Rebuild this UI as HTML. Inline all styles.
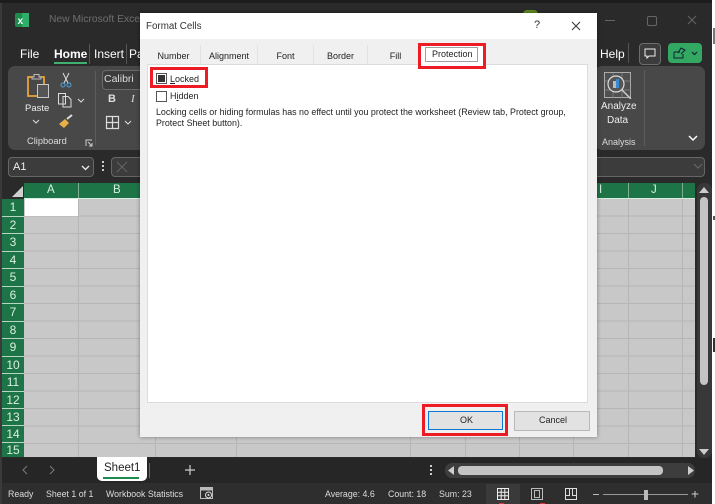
<!DOCTYPE html>
<html><head><meta charset="utf-8">
<style>
html,body{margin:0;padding:0}
body{width:715px;height:504px;overflow:hidden;position:relative;background:#2a2a2a;font-family:"Liberation Sans",sans-serif;color:#fff}
.a{position:absolute}
.t{position:absolute;white-space:nowrap;line-height:1}
.rh{position:absolute;left:2px;width:22px;background:#1d7446;color:#d8f0e0;font-size:12px;text-align:center;border-bottom:1px solid #b9d6c4;box-sizing:border-box}
.d{color:#222;font-size:9px}
.s{color:#ddd;font-size:8.800px}
.tab{position:absolute;top:45px;height:19px;font-size:9px;color:#222;text-align:center;line-height:22px;border-right:1px solid #e2e2e2}
.v{position:absolute;top:198px;width:1px;height:259px;background:#b6b6b6}
.h{position:absolute;top:183px;width:1px;height:15px;background:#7fb095}
</style></head><body>
<div class="a" style="left:712px;top:0;width:3px;height:504px;background:#fff"></div>
<div class="a" style="left:713px;top:28px;width:2px;height:16px;background:#777"></div>
<div class="a" style="left:713px;top:216px;width:2px;height:4px;background:#555"></div>
<div class="a" style="left:713px;top:338px;width:2px;height:14px;background:#333"></div>
<div class="a" style="left:0;top:0;width:2px;height:504px;background:#3a3a3a"></div>
<div class="a" style="left:0;top:0;width:712px;height:3px;background:#1c1c1c"></div>

<!-- title bar -->
<svg class="a" style="left:15px;top:13px" width="15" height="15"><rect width="14" height="14" rx="2" fill="#1f8a4c"/><rect x="7" y="0" width="7" height="14" fill="#2fae6a"/><text x="2.500" y="11" font-size="10" font-weight="bold" fill="#fff" font-family="Liberation Sans">x</text></svg>
<div class="t" style="left:49px;top:15px;font-size:10.300px;color:#6e6e6e">New Microsoft Excel</div>
<div class="a" style="left:523px;top:10px;width:15px;height:4px;background:#5f8c20;border-radius:8px 8px 0 0"></div>
<div class="a" style="left:605px;top:20px;width:10px;height:1px;background:#666"></div>
<div class="a" style="left:647px;top:16px;width:8px;height:8px;border:1px solid #666;border-radius:2px"></div>
<svg class="a" style="left:686px;top:14px" width="12" height="12"><path d="M2 2L10 10M10 2L2 10" stroke="#666" stroke-width="1"/></svg>

<!-- tabs -->
<div class="t" style="left:20px;top:48px;font-size:12px">File</div>
<div class="t" style="left:54px;top:48px;font-size:12px;font-weight:bold">Home</div>
<div class="a" style="left:54px;top:62px;width:33px;height:2px;background:#3fb06f"></div>
<div class="a" style="left:89px;top:44px;width:1px;height:20px;background:#555"></div>
<div class="t" style="left:94px;top:48px;font-size:12px">Insert</div>
<div class="a" style="left:126px;top:44px;width:1px;height:20px;background:#555"></div>
<div class="t" style="left:129px;top:48px;font-size:12px">Pa</div>
<div class="t" style="left:600px;top:48px;font-size:12px">Help</div>
<div class="a" style="left:628px;top:43px;width:1px;height:20px;background:#555"></div>
<div class="a" style="left:639px;top:43px;width:20px;height:20px;border:1px solid #6d6d6d;border-radius:4px;background:#3c3c3c"></div>
<svg class="a" style="left:643px;top:47px" width="14" height="14"><path d="M2 2H12V9H6L4 11V9H2Z" fill="none" stroke="#eee" stroke-width="1"/></svg>
<div class="a" style="left:668px;top:43px;width:34px;height:20px;border-radius:4px;background:#33a862"></div>
<svg class="a" style="left:672px;top:46px" width="28" height="14"><path d="M2 6H8M2 6V12H11V8M6 7L9 2L13 4L9 8" fill="none" stroke="#123" stroke-width="1"/><path d="M20 6L22.500 8.500L25 6" fill="none" stroke="#123" stroke-width="1.200"/></svg>

<!-- ribbon -->
<div class="a" style="left:8px;top:66px;width:317px;height:84px;background:#484848;border-radius:7px"></div>
<div class="a" style="left:595px;top:66px;width:110px;height:84px;background:#484848;border-radius:7px"></div>
<svg class="a" style="left:26px;top:73px" width="25" height="26"><path d="M8 4H2V23H17" fill="none" stroke="#e9a43b" stroke-width="1.800"/><path d="M13 4H18V11" fill="none" stroke="#e9a43b" stroke-width="1.800"/><path d="M8 4V1.500H13V4H15V6H6V4Z" fill="#484848" stroke="#bbb"/><rect x="11.500" y="11.500" width="11" height="13" fill="#555" stroke="#c8c8c8"/></svg>
<div class="t" style="left:25px;top:104px;font-size:9.500px;color:#eee">Paste</div>
<svg class="a" style="left:31px;top:118px" width="10" height="8"><path d="M2 2L5 5L8 2" fill="none" stroke="#ddd"/></svg>
<svg class="a" style="left:60px;top:72px" width="12" height="16"><path d="M3 1L8 11M9 1L4 11" stroke="#ddd" fill="none"/><circle cx="3" cy="13" r="2" fill="none" stroke="#4ba3e0"/><circle cx="9" cy="13" r="2" fill="none" stroke="#4ba3e0"/></svg>
<svg class="a" style="left:58px;top:93px" width="28" height="15"><path d="M.5 .5H7.500V11H.5Z M5 3.500H10L13 6.500V14H5Z" fill="#484848" stroke="#ddd"/><path d="M20 6L23 9L26 6" fill="none" stroke="#ddd"/></svg>
<svg class="a" style="left:58px;top:114px" width="16" height="16"><path d="M1 10L7 5L11 9L6 14Z" fill="#e9b048"/><path d="M9 5L14 1" stroke="#ddd" stroke-width="2"/></svg>
<div class="t" style="left:27px;top:137px;font-size:9.300px;color:#ddd">Clipboard</div>
<svg class="a" style="left:85px;top:139px" width="8" height="8"><path d="M1 7V1H7M3 3L7 7M7 4V7H4" fill="none" stroke="#ccc"/></svg>
<div class="a" style="left:95px;top:71px;width:1px;height:74px;background:#5c5c5c"></div>
<div class="a" style="left:102px;top:70px;width:38px;height:18px;background:#3c3c3c;border:1px solid #6a6a6a;border-radius:4px 0 0 4px"></div>
<div class="t" style="left:104px;top:74px;font-size:10.500px;color:#ddd">Calibri</div>
<div class="t" style="left:108px;top:94px;font-size:11px;font-weight:bold;color:#ddd">B</div>
<div class="t" style="left:131px;top:94px;font-size:11px;font-style:italic;font-family:'Liberation Serif',serif;color:#ddd">I</div>
<svg class="a" style="left:105px;top:115px" width="34" height="15"><path d="M1.500 1.500H13.500V13.500H1.500ZM7.500 1.500V13.500M1.500 7.500H13.500" fill="none" stroke="#ddd" stroke-width="1.200"/><path d="M20 6L23 9L26 6" fill="none" stroke="#ddd"/></svg>

<svg class="a" style="left:604px;top:72px" width="29" height="27"><rect x=".5" y=".5" width="26" height="25" fill="#505050" stroke="#aaa"/><path d="M1 9H27M1 18H27M9 1V26M18 1V26" stroke="#8a8a8a" stroke-width=".7"/><circle cx="12" cy="12" r="8" fill="#555" stroke="#ddd" stroke-width="1.200"/><rect x="9" y="9" width="3" height="7" fill="#bbb"/><rect x="12" y="7" width="3" height="9" fill="#3b8ad0"/><path d="M18 18L27 27" stroke="#ccc" stroke-width="1.500"/></svg>
<div class="t" style="left:601px;top:102px;font-size:10px;color:#eee">Analyze</div>
<div class="t" style="left:607px;top:116px;font-size:10px;color:#eee">Data</div>
<div class="t" style="left:602px;top:138px;font-size:9px;color:#ddd">Analysis</div>
<div class="a" style="left:644px;top:70px;width:1px;height:76px;background:#5c5c5c"></div>
<svg class="a" style="left:688px;top:134px" width="10" height="9"><path d="M1 2L5 6L9 2" fill="none" stroke="#fff" stroke-width="1.500"/></svg>

<!-- formula bar -->
<div class="a" style="left:8px;top:157px;width:86px;height:20px;box-sizing:border-box;background:#3c3c3c;border:1px solid #666;border-radius:4px"></div>
<div class="t" style="left:13px;top:162px;font-size:11px;color:#eee">A1</div>
<svg class="a" style="left:81px;top:164px" width="10" height="8"><path d="M1 2L4.500 5.500L8 2" fill="none" stroke="#eee" stroke-width="1.300"/></svg>
<div class="a" style="left:102px;top:161px;width:2px;height:2px;background:#ccc;box-shadow:0 4px #ccc,0 8px #ccc"></div>
<div class="a" style="left:111px;top:157px;width:30px;height:20px;box-sizing:border-box;background:#3c3c3c;border:1px solid #666;border-radius:4px 0 0 4px"></div>
<svg class="a" style="left:116px;top:161px" width="12" height="12"><path d="M1 1L11 11M11 1L1 11" stroke="#666"/></svg>
<div class="a" style="left:597px;top:157px;width:108px;height:20px;box-sizing:border-box;background:#3c3c3c;border:1px solid #666;border-left:0;border-radius:0 4px 4px 0"></div>
<svg class="a" style="left:693px;top:162px" width="10" height="8"><path d="M1 2L5 6L9 2" fill="none" stroke="#666" stroke-width="1.200"/></svg>

<!-- grid -->
<div class="a" style="left:24px;top:198px;width:671px;height:259px;background:#c8c8c8"></div>
<div class="a" style="left:24px;top:199px;width:671px;height:258px;background-image:repeating-linear-gradient(to bottom,transparent 0,transparent 16.500px,#b6b6b6 16.500px,#b6b6b6 17.500px)"></div>
<div class="v" style="left:78px"></div>
<div class="v" style="left:155px"></div>
<div class="v" style="left:236px"></div>
<div class="v" style="left:410px"></div>
<div class="v" style="left:465px"></div>
<div class="v" style="left:519px"></div>
<div class="v" style="left:573px"></div>
<div class="v" style="left:628px"></div>
<div class="v" style="left:682px"></div>
<div class="a" style="left:25px;top:199px;width:53px;height:17px;background:#fff"></div>

<!-- col headers -->
<div class="a" style="left:24px;top:183px;width:671px;height:16px;background:#1d7446;border-bottom:1px solid #d8ecdf;box-sizing:border-box"></div>
<svg class="a" style="left:10px;top:185px" width="14" height="13"><path d="M13 1V12H2Z" fill="#d0d0d0"/></svg>
<div class="h" style="left:78px"></div>
<div class="h" style="left:155px"></div>
<div class="h" style="left:628px"></div>
<div class="h" style="left:682px"></div>
<div class="t" style="left:47px;top:185px;font-size:11.500px;color:#d8f0e0">A</div>
<div class="t" style="left:113px;top:185px;font-size:11.500px;color:#d8f0e0">B</div>
<div class="t" style="left:599px;top:185px;font-size:11.500px;color:#d8f0e0">I</div>
<div class="t" style="left:651px;top:185px;font-size:11.500px;color:#d8f0e0">J</div>

<div class="rh" style="top:199px;height:17.500px;line-height:17px">1</div>
<div class="rh" style="top:216.500px;height:17.500px;line-height:17px">2</div>
<div class="rh" style="top:234px;height:17.500px;line-height:17px">3</div>
<div class="rh" style="top:251.500px;height:17.500px;line-height:17px">4</div>
<div class="rh" style="top:269px;height:17.500px;line-height:17px">5</div>
<div class="rh" style="top:286.500px;height:17.500px;line-height:17px">6</div>
<div class="rh" style="top:304px;height:17.500px;line-height:17px">7</div>
<div class="rh" style="top:321.500px;height:17.500px;line-height:17px">8</div>
<div class="rh" style="top:339px;height:17.500px;line-height:17px">9</div>
<div class="rh" style="top:356.500px;height:17.500px;line-height:17px">10</div>
<div class="rh" style="top:374px;height:17.500px;line-height:17px">11</div>
<div class="rh" style="top:391.500px;height:17.500px;line-height:17px">12</div>
<div class="rh" style="top:409px;height:17px;line-height:17px">13</div>
<div class="rh" style="top:426px;height:17px;line-height:17px">14</div>
<div class="rh" style="top:443px;height:14px;line-height:15px;border:0">15</div>

<!-- vertical scrollbar -->
<div class="a" style="left:697px;top:183px;width:15px;height:275px;background:#383838;border-radius:7px"></div>
<svg class="a" style="left:698px;top:186px" width="12" height="9"><path d="M6 1L11 7H1Z" fill="#ccc"/></svg>
<div class="a" style="left:700px;top:197px;width:8px;height:188px;background:#c4c4c4;border-radius:4px"></div>
<svg class="a" style="left:698px;top:448px" width="12" height="9"><path d="M1 1H11L6 7Z" fill="#ccc"/></svg>

<!-- sheet bar -->
<div class="a" style="left:2px;top:458px;width:710px;height:25px;background:#262626"></div>
<svg class="a" style="left:20px;top:464px" width="40" height="12"><path d="M7 2L3 6L7 10M30 2L34 6L30 10" fill="none" stroke="#777" stroke-width="1.100"/></svg>
<div class="a" style="left:97px;top:457px;width:50px;height:24px;background:#fff;border-radius:0 0 5px 5px"></div>
<div class="t" style="left:104px;top:463px;font-size:11.500px;color:#222">Sheet1</div>
<div class="a" style="left:103px;top:477px;width:36px;height:2px;background:#1d8a4e"></div>
<div class="a" style="left:149px;top:463px;width:1px;height:15px;background:#666"></div>
<svg class="a" style="left:183px;top:463px" width="14" height="14"><path d="M7 2V12M2 7H12" stroke="#ccc" stroke-width="1.200"/></svg>
<div class="a" style="left:430px;top:465px;width:2px;height:2px;background:#ccc;box-shadow:0 4px #ccc,0 8px #ccc"></div>
<div class="a" style="left:445px;top:463px;width:250px;height:15px;background:#3d3d3d;border-radius:7px"></div>
<svg class="a" style="left:447px;top:465px" width="10" height="11"><path d="M7 1L1 5.500L7 10Z" fill="#ccc"/></svg>
<div class="a" style="left:458px;top:466px;width:205px;height:9px;background:#c4c4c4;border-radius:4px"></div>
<svg class="a" style="left:686px;top:465px" width="10" height="11"><path d="M2 1L8 5.500L2 10Z" fill="#ccc"/></svg>

<!-- status bar -->
<div class="a" style="left:2px;top:483px;width:710px;height:21px;background:#2e2e2e"></div>
<div class="t s" style="left:8px;top:490px">Ready</div>
<div class="t s" style="left:46px;top:490px">Sheet 1 of 1</div>
<div class="t s" style="left:106px;top:490px">Workbook Statistics</div>
<svg class="a" style="left:200px;top:487px" width="14" height="13"><rect x=".5" y=".5" width="12" height="11" fill="none" stroke="#bbb"/><rect x=".5" y=".5" width="12" height="3" fill="#bbb"/><circle cx="8.500" cy="8" r="3" fill="#2e2e2e" stroke="#ddd"/><circle cx="8.500" cy="8" r="1" fill="#ddd"/></svg>
<div class="t s" style="left:325px;top:490px">Average: 4.6</div>
<div class="t s" style="left:388px;top:490px">Count: 18</div>
<div class="t s" style="left:439px;top:490px">Sum: 23</div>
<div class="a" style="left:486px;top:484px;width:34px;height:20px;background:#3a3a3a"></div>
<svg class="a" style="left:497px;top:488px" width="13" height="12"><path d="M.5 .5H11.500V11.500H.5ZM.5 4.200H11.500M.5 7.800H11.500M4.200 .5V11.500M7.800 .5V11.500" fill="none" stroke="#eee"/></svg>
<svg class="a" style="left:531px;top:488px" width="13" height="12"><rect x=".5" y=".5" width="11" height="11" fill="none" stroke="#bbb"/><rect x="3.500" y="2.500" width="5" height="7" fill="none" stroke="#bbb"/></svg>
<svg class="a" style="left:565px;top:488px" width="13" height="12"><path d="M.5 .5H11.500V11.500H.5ZM.5 7.500H4.500V.5M7.500 .5V7.500H11.500" fill="none" stroke="#ddd"/></svg>
<div class="a" style="left:593px;top:494px;width:6px;height:1px;background:#bbb"></div>
<div class="a" style="left:603px;top:494px;width:85px;height:1px;background:#999"></div>
<div class="a" style="left:644px;top:490px;width:4px;height:10px;background:#bbb"></div>
<svg class="a" style="left:690px;top:489px" width="10" height="10"><path d="M5 2V8.500M1.700 5H8.300" stroke="#ccc"/></svg>
<div class="a" style="left:499px;top:503px;width:5px;height:1px;background:#d33"></div>
<div class="a" style="left:540px;top:503px;width:5px;height:1px;background:#d33"></div>

<!-- dialog -->
<div class="a" style="left:140px;top:13px;width:457px;height:424px;background:#f0f0f0;box-shadow:0 0 4px rgba(0,0,0,.4)"></div>
<div class="a" style="left:140px;top:13px;width:457px;height:26px;background:#fff"></div>
<div class="t" style="left:146px;top:21.500px;font-size:9.800px;color:#333">Format Cells</div>
<div class="t" style="left:534px;top:20px;font-size:11px;color:#333">?</div>
<svg class="a" style="left:570px;top:20px" width="12" height="12"><path d="M2 2L10 10M10 2L2 10" stroke="#333" stroke-width="1"/></svg>

<div class="tab" style="left:147px;width:53px">Number</div>
<div class="tab" style="left:201px;width:56px">Alignment</div>
<div class="tab" style="left:258px;width:55px">Font</div>
<div class="tab" style="left:314px;width:53px">Border</div>
<div class="tab" style="left:368px;width:55px;border:0">Fill</div>
<div class="a" style="left:147px;top:64px;width:441px;height:339px;background:#fff;border:1px solid #dcdcdc;box-sizing:border-box"></div>

<!-- protection tab highlighted -->
<div class="a" style="left:418px;top:43px;width:68px;height:26px;box-sizing:border-box;border:3px solid #ed1c24;background:#fff"></div>
<div class="a" style="left:425px;top:47px;width:53px;height:15px;box-sizing:border-box;border:1px solid #a0a0a0;background:#fff"></div>
<div class="t d" style="left:432px;top:50px">Protection</div>

<!-- Locked -->
<div class="a" style="left:150px;top:67px;width:58px;height:21px;box-sizing:border-box;border:3px solid #ed1c24;background:#fff"></div>
<div class="a" style="left:156px;top:73px;width:11px;height:11px;box-sizing:border-box;border:1px solid #555;background:#fff"></div>
<div class="a" style="left:158px;top:75px;width:7px;height:7px;background:#333"></div>
<div class="t d" style="left:170px;top:75px"><u>L</u>ocked</div>
<div class="a" style="left:156px;top:91px;width:11px;height:11px;box-sizing:border-box;border:1px solid #555;background:#fff"></div>
<div class="t d" style="left:170px;top:92px">H<u>i</u>dden</div>
<div class="t d" style="left:156px;top:108px;font-size:8.900px">Locking cells or hiding formulas has no effect until you protect the worksheet (Review tab, Protect group,</div>
<div class="t d" style="left:156px;top:119px;font-size:8.900px">Protect Sheet button).</div>

<!-- OK / Cancel -->
<div class="a" style="left:422px;top:404px;width:86px;height:32px;box-sizing:border-box;border:3px solid #ed1c24"></div>
<div class="a" style="left:428px;top:411px;width:75px;height:19px;box-sizing:border-box;border:1px solid #0a78d7;background:#e2e2e2"></div>
<div class="t d" style="left:460px;top:416px">OK</div>
<div class="a" style="left:514px;top:411px;width:76px;height:20px;box-sizing:border-box;border:1px solid #b8b8b8;background:#e2e2e2"></div>
<div class="t d" style="left:539px;top:416px">Cancel</div>
</body></html>
